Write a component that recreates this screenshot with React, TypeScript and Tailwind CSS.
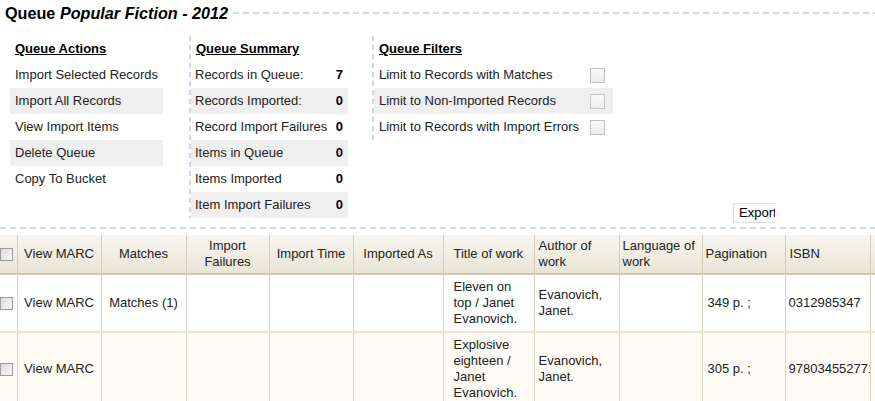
import React from "react";

function SmallBox() {
  return (
    <span className="block w-[13px] h-[13px] border border-[#9c9c9c] bg-[linear-gradient(135deg,#dcdcdc,#f7f7f7)]" />
  );
}

function FilterBox() {
  return (
    <span className="block w-[15px] h-[15px] border border-[#c4c4c4] bg-[linear-gradient(#fafafa,#ececec)]" />
  );
}

const actions = [
  "Import Selected Records",
  "Import All Records",
  "View Import Items",
  "Delete Queue",
  "Copy To Bucket",
];

const summary: [string, string][] = [
  ["Records in Queue:", "7"],
  ["Records Imported:", "0"],
  ["Record Import Failures", "0"],
  ["Items in Queue", "0"],
  ["Items Imported", "0"],
  ["Item Import Failures", "0"],
];

const filters = [
  "Limit to Records with Matches",
  "Limit to Non-Imported Records",
  "Limit to Records with Import Errors",
];

export default function App() {
  const th =
    "border-r border-[#d6cdb8] border-b-2 border-b-[#d0c7b1] py-[3px] font-normal leading-[16px] align-middle bg-[linear-gradient(#f8f6f0,#e9e4d7)] text-[#222]";
  const td = "border-r border-[#ddd5c2] py-[4px] leading-[16px] align-middle text-[#222]";
  return (
    <div className="w-[875px] h-[401px] overflow-hidden bg-white text-[13px] text-[#222] font-['Liberation_Sans',Arial,sans-serif]">
      {/* Title */}
      <div className="flex items-center h-[22px] pt-[3px] pl-[5px]">
        <div className="text-[16.2px] leading-[20px] font-bold text-black whitespace-nowrap">
          Queue <span className="italic">Popular Fiction - 2012</span>
        </div>
        <div className="flex-1 ml-[5px] h-[2px] bg-[linear-gradient(to_right,#d2dae4_60%,transparent_60%)] bg-[length:10px_2px] bg-repeat-x" />
      </div>

      {/* Top panels */}
      <div className="flex items-start mt-[14px] pl-[10px]">
        {/* Actions */}
        <div className="w-[153px] flex flex-col">
          <div className="h-[26px] flex items-center px-[5px] font-bold underline text-black">Queue Actions</div>
          {actions.map((a, i) => (
            <div
              key={a}
              className={
                "h-[26px] flex items-center px-[5px] whitespace-nowrap " + (i % 2 === 1 ? "bg-[#efefef]" : "")
              }
            >
              {a}
            </div>
          ))}
        </div>

        {/* Summary */}
        <div className="flex ml-[26px]">
          <div className="w-[2px] self-stretch bg-[linear-gradient(to_bottom,#cbd8e8_55%,transparent_55%)] bg-[length:2px_9px] bg-repeat-y" />
          <div className="w-[157px] flex flex-col">
            <div className="h-[26px] flex items-center px-[5px] font-bold underline text-black">Queue Summary</div>
            {summary.map(([l, v], i) => (
              <div
                key={l}
                className={
                  "h-[26px] flex items-center justify-between pl-[4px] pr-[5px] whitespace-nowrap " +
                  (i % 2 === 1 ? "bg-[#efefef]" : "")
                }
              >
                <span>{l}</span>
                <span className="font-bold text-black">{v}</span>
              </div>
            ))}
          </div>
        </div>

        {/* Filters */}
        <div className="flex ml-[24px]">
          <div className="w-[2px] self-stretch bg-[linear-gradient(to_bottom,#cbd8e8_55%,transparent_55%)] bg-[length:2px_9px] bg-repeat-y" />
          <div className="w-[239px] flex flex-col">
            <div className="h-[26px] flex items-center px-[5px] font-bold underline text-black">Queue Filters</div>
            {filters.map((f, i) => (
              <div
                key={f}
                className={
                  "h-[26px] flex items-center justify-between pl-[5px] pr-[8px] whitespace-nowrap " +
                  (i % 2 === 1 ? "bg-[#efefef]" : "")
                }
              >
                <span>{f}</span>
                <FilterBox />
              </div>
            ))}
          </div>
        </div>

        {/* Export */}
        <div className="ml-auto mr-[100px] self-end mb-[-5px] w-[42px] h-[20px] overflow-hidden border-l border-t border-b border-[#dcdcdc] bg-white flex items-center pl-[5px] whitespace-nowrap text-black text-[13px]">
          Export
        </div>
      </div>

      {/* Divider */}
      <div className="mt-[9px] h-[2px] bg-[linear-gradient(to_right,#d2dae4_60%,transparent_60%)] bg-[length:10px_2px] bg-repeat-x" />

      {/* Table */}
      <table className="mt-[6px] table-fixed border-collapse w-[970px]">
        <colgroup>
          <col className="w-[17px]" />
          <col className="w-[84px]" />
          <col className="w-[85px]" />
          <col className="w-[83px]" />
          <col className="w-[84px]" />
          <col className="w-[90px]" />
          <col className="w-[91px]" />
          <col className="w-[85px]" />
          <col className="w-[83px]" />
          <col className="w-[83px]" />
          <col className="w-[85px]" />
          <col className="w-[100px]" />
        </colgroup>
        <thead>
          <tr className="h-[37px]">
            <th className={th + " p-0"}>
              <SmallBox />
            </th>
            <th className={th + " px-[2px] text-center whitespace-nowrap"}>View MARC</th>
            <th className={th + " px-[4px] text-center"}>Matches</th>
            <th className={th + " px-[4px] text-center"}>Import Failures</th>
            <th className={th + " px-[4px] text-center whitespace-nowrap"}>Import Time</th>
            <th className={th + " px-[4px] text-center whitespace-nowrap"}>Imported As</th>
            <th className={th + " pl-[10px] pr-[2px] text-left whitespace-nowrap"}>Title of work</th>
            <th className={th + " pl-[4px] pr-[4px] text-left"}>Author of work</th>
            <th className={th + " pl-[3px] pr-[4px] text-left"}>Language of work</th>
            <th className={th + " pl-[3px] pr-[4px] text-left"}>Pagination</th>
            <th className={th + " pl-[4px] pr-[4px] text-left"}>ISBN</th>
            <th className={th + " px-[4px] text-left"}></th>
          </tr>
        </thead>
        <tbody>
          <tr className="bg-white border-b-2 border-[#ece6d8]">
            <td className={td + " p-0"}>
              <SmallBox />
            </td>
            <td className={td + " px-[2px] text-center whitespace-nowrap"}>View MARC</td>
            <td className={td + " px-[4px] text-center whitespace-nowrap"}>Matches (1)</td>
            <td className={td}></td>
            <td className={td}></td>
            <td className={td}></td>
            <td className={td + " pl-[10px] pr-[4px] text-left"}>Eleven on top / Janet Evanovich.</td>
            <td className={td + " pl-[4px] pr-[4px] text-left"}>Evanovich, Janet.</td>
            <td className={td}></td>
            <td className={td + " pl-[5px] pr-[4px] text-left whitespace-nowrap"}>349 p. ;</td>
            <td className={td + " pl-[3px] pr-0 text-left whitespace-nowrap overflow-hidden"}>0312985347</td>
            <td className={td}></td>
          </tr>
          <tr className="bg-[#fdfbf3]">
            <td className={td + " p-0"}>
              <SmallBox />
            </td>
            <td className={td + " px-[2px] text-center whitespace-nowrap"}>View MARC</td>
            <td className={td}></td>
            <td className={td}></td>
            <td className={td}></td>
            <td className={td}></td>
            <td className={td + " pl-[10px] pr-[4px] text-left"}>Explosive eighteen / Janet Evanovich.</td>
            <td className={td + " pl-[4px] pr-[4px] text-left"}>Evanovich, Janet.</td>
            <td className={td}></td>
            <td className={td + " pl-[5px] pr-[4px] text-left whitespace-nowrap"}>305 p. ;</td>
            <td className={td + " pl-[3px] pr-0 text-left whitespace-nowrap overflow-hidden"}>9780345527714</td>
            <td className={td}></td>
          </tr>
        </tbody>
      </table>
    </div>
  );
}
